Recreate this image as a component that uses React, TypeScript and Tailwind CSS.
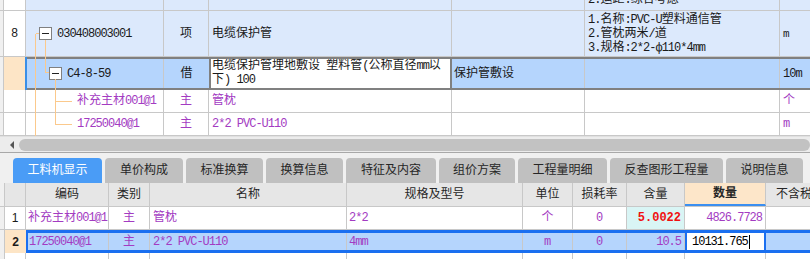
import React from "react";

const ascii = /^[\x20-\x7e\u0444]+$/;

function mix(s: string) {
  return s
    .split(/([\x20-\x7e\u0444]+)/)
    .filter(Boolean)
    .map((p, i) =>
      ascii.test(p) ? (
        <span key={i} className="tracking-[-1px] whitespace-pre">
          {p}
        </span>
      ) : (
        <span key={i}>{p}</span>
      )
    );
}

function MinusBox() {
  return (
    <span className="w-[13px] h-[13px] shrink-0 border border-[#808080] bg-white flex items-center justify-center">
      <span className="w-[7px] h-[1px] bg-[#222]" />
    </span>
  );
}

const tabs = [
  { label: "工料机显示", w: "w-[89px]", active: true },
  { label: "单价构成", w: "w-[78px]" },
  { label: "标准换算", w: "w-[77px]" },
  { label: "换算信息", w: "w-[77px]" },
  { label: "特征及内容", w: "w-[90px]" },
  { label: "组价方案", w: "w-[76px]" },
  { label: "工程量明细", w: "w-[89px]" },
  { label: "反查图形工程量", w: "w-[113px]" },
  { label: "说明信息", w: "w-[77px]" },
];

export default function App() {
  const purple = "text-[#a33bc2]";
  return (
    <div className="w-[810px] h-[259px] overflow-hidden bg-[#f0f0f0] text-[12px] leading-[14px] text-[#1a1a1a] font-['Liberation_Mono','Noto_Sans_CJK_SC',monospace]">
      {/* upper tree grid */}
      <div className="relative h-[136px] bg-white">
        {/* partial row */}
        <div className="flex h-[11px] border-b border-[#c8c8c8]">
          <div className="w-[4px] bg-[#f0f0f0] border-r border-[#c8c8c8]" />
          <div className="w-[22px] bg-white border-r border-[#c8c8c8]" />
          <div className="w-[138px] bg-[#dce9fc] border-r border-[#c8c8c8]" />
          <div className="w-[45px] bg-[#dce9fc] border-r border-[#c8c8c8]" />
          <div className="w-[243px] bg-[#dce9fc] border-r border-[#c8c8c8]" />
          <div className="w-[133px] bg-[#dce9fc] border-r border-[#c8c8c8]" />
          <div className="w-[195px] bg-[#dce9fc] border-r border-[#c8c8c8] flex items-end pl-[3px] pb-[3px] overflow-hidden">
            <span className="whitespace-nowrap">{mix("2.运距:综合考虑")}</span>
          </div>
          <div className="flex-1 bg-[#dce9fc]" />
        </div>

        {/* row 8 */}
        <div className="flex h-[46px] border-b border-[#c8c8c8]">
          <div className="w-[4px] bg-[#f0f0f0] border-r border-[#c8c8c8]" />
          <div className="w-[22px] bg-white border-r border-[#c8c8c8] flex items-center justify-center">8</div>
          <div className="w-[138px] bg-[#dce9fc] border-r border-[#c8c8c8] flex items-center pl-[13px] gap-[5px]">
            <MinusBox />
            <span className="tracking-[-1px]">030408003001</span>
          </div>
          <div className="w-[45px] bg-[#dce9fc] border-r border-[#c8c8c8] flex items-center justify-center">项</div>
          <div className="w-[243px] bg-[#dce9fc] border-r border-[#c8c8c8] flex items-center pl-[3px]">电缆保护管</div>
          <div className="w-[133px] bg-[#dce9fc] border-r border-[#c8c8c8]" />
          <div className="w-[195px] bg-[#dce9fc] border-r border-[#c8c8c8] flex flex-col justify-center pl-[3px]">
            <div>{mix("1.名称:PVC-U塑料通信管")}</div>
            <div>{mix("2.管枕两米/道")}</div>
            <div>{mix("3.规格:2*2-ф110*4mm")}</div>
          </div>
          <div className="flex-1 bg-[#dce9fc] flex items-center pl-[3px] text-[11px]">m</div>
        </div>

        {/* row C4-8-59 */}
        <div className="flex h-[33px]">
          <div className="w-[4px] bg-[#f0f0f0] border-r border-[#c8c8c8]" />
          <div className="w-[23px] bg-[#fde5c6] border-r-2 border-[#3a8ee6]" />
          <div className="flex flex-1 border-y-2 border-[#808080] bg-[#b5d5fd]">
            <div className="w-[137px] border-r border-[#c8c8c8] flex items-center pl-[22px] gap-[5px]">
              <MinusBox />
              <span className="tracking-[-1px]">C4-8-59</span>
            </div>
            <div className="w-[45px] flex items-center justify-center">借</div>
            <div className="w-[243px] bg-white border-x-2 border-[#808080] pl-[1px] leading-[14px] pt-0 overflow-hidden">
              {mix("电缆保护管埋地敷设 塑料管(公称直径mm以下) 100")}
            </div>
            <div className="w-[133px] border-r border-[#c8c8c8] flex items-center pl-[2px]">保护管敷设</div>
            <div className="w-[195px] border-r border-[#c8c8c8]" />
            <div className="flex-1 flex items-center pl-[3px] tracking-[-1px]">10m</div>
          </div>
        </div>

        {/* child rows */}
        {[
          { code: "补充主材001@1", name: "管枕", unit: "个" },
          { code: "17250040@1", name: "2*2 PVC-U110", unit: "m" },
        ].map((r) => (
          <div key={r.code} className="flex h-[23px] border-b border-[#c8c8c8]">
            <div className="w-[4px] bg-[#f0f0f0] border-r border-[#c8c8c8]" />
            <div className="w-[22px] border-r border-[#c8c8c8]" />
            <div className={`w-[138px] border-r border-[#c8c8c8] flex items-center pl-[51px] whitespace-nowrap ${purple}`}>
              {mix(r.code)}
            </div>
            <div className={`w-[45px] border-r border-[#c8c8c8] flex items-center justify-center ${purple}`}>主</div>
            <div className={`w-[243px] border-r border-[#c8c8c8] flex items-center pl-[3px] ${purple}`}>{mix(r.name)}</div>
            <div className="w-[133px] border-r border-[#c8c8c8]" />
            <div className="w-[195px] border-r border-[#c8c8c8]" />
            <div className={`flex-1 flex items-center pl-[3px] ${purple}`}>{r.unit}</div>
          </div>
        ))}

        {/* tree connectors */}
        <svg className="absolute left-0 top-0 pointer-events-none" width="810" height="136">
          <g stroke="#fbc98c" strokeWidth="1" fill="none" shapeRendering="crispEdges">
            <path d="M35.5 33.5V136M35.5 33.5H39" />
            <path d="M45.5 40V72.5H49" />
            <path d="M55.5 79V124.5H72M55.5 101.5H72" />
          </g>
        </svg>
      </div>

      {/* horizontal scrollbar */}
      <div className="h-[17px] bg-[#ececec] border-y border-[#e0e0e0] border-b-[#a8a8a8] flex items-center">
        <div className="w-[19px] flex justify-center pl-[4px]">
          <span className="w-0 h-0 border-y-[4px] border-y-transparent border-r-[4px] border-r-[#555]" />
        </div>
        <div className="flex-1 h-[12px] rounded-full bg-[#c2c2c2]" />
      </div>

      {/* tabs */}
      <div className="flex gap-[3px] pl-[13px] pt-[5px] h-[30px]">
        {tabs.map((t) => (
          <div
            key={t.label}
            className={`${t.w} h-[25px] rounded-t-[4px] flex items-center justify-center text-[12px] ${
              t.active ? "bg-[#4a9cf6] text-white" : "bg-[#c0c0c0] text-[#262626]"
            }`}
          >
            {t.label}
          </div>
        ))}
      </div>

      {/* lower grid */}
      <div className="bg-white">
        <div className="flex h-[24px] bg-[#e6e6e6] border-b border-[#c8c8c8] text-[#262626]">
          <div className="w-[5px] bg-[#f0f0f0] border-r border-[#c8c8c8]" />
          <div className="w-[21px] border-r border-[#c8c8c8]" />
          <div className="w-[83px] border-r border-[#c8c8c8] flex items-center justify-center">编码</div>
          <div className="w-[41px] border-r border-[#c8c8c8] flex items-center justify-center">类别</div>
          <div className="w-[197px] border-r border-[#c8c8c8] flex items-center justify-center">名称</div>
          <div className="w-[176px] border-r border-[#c8c8c8] flex items-center justify-center">规格及型号</div>
          <div className="w-[50px] border-r border-[#c8c8c8] flex items-center justify-center">单位</div>
          <div className="w-[54px] border-r border-[#c8c8c8] flex items-center justify-center">损耗率</div>
          <div className="w-[58px] border-r border-[#c8c8c8] flex items-center justify-center">含量</div>
          <div className="w-[81px] border-r border-[#c8c8c8] bg-[#fde6c9] border-b-2 border-b-[#3b8ff0] flex items-center justify-center font-bold">
            数量
          </div>
          <div className="flex-1 flex items-center pl-[10px] whitespace-nowrap overflow-hidden">不含税</div>
        </div>

        {/* row 1 */}
        <div className="flex h-[23px] border-b border-[#c8c8c8]">
          <div className="w-[5px] bg-[#f0f0f0] border-r border-[#c8c8c8]" />
          <div className="w-[21px] border-r border-[#c8c8c8] flex items-center justify-center font-['Liberation_Sans']">1</div>
          <div className={`w-[83px] border-r border-[#c8c8c8] flex items-center pl-[2px] whitespace-nowrap overflow-hidden ${purple}`}>
            {mix("补充主材001@1")}
          </div>
          <div className={`w-[41px] border-r border-[#c8c8c8] flex items-center justify-center ${purple}`}>主</div>
          <div className={`w-[197px] border-r border-[#c8c8c8] flex items-center pl-[3px] ${purple}`}>管枕</div>
          <div className={`w-[176px] border-r border-[#c8c8c8] flex items-center pl-[2px] tracking-[-1px] ${purple}`}>2*2</div>
          <div className={`w-[50px] border-r border-[#c8c8c8] flex items-center justify-center ${purple}`}>个</div>
          <div className={`w-[54px] border-r border-[#c8c8c8] flex items-center justify-center ${purple}`}>0</div>
          <div className="w-[58px] border-r border-[#c8c8c8] bg-[#d9f5f5] flex items-center justify-end pr-[3px] font-bold text-[#f01010]">
            5.0022
          </div>
          <div className={`w-[81px] border-r border-[#c8c8c8] flex items-center justify-end pr-[3px] tracking-[-1px] ${purple}`}>
            4826.7728
          </div>
          <div className="flex-1" />
        </div>

        {/* row 2 selected */}
        <div className="flex h-[23px]">
          <div className="w-[5px] bg-[#f0f0f0] border-r border-[#c8c8c8]" />
          <div className="w-[21px] bg-[#fde5c6] flex items-center justify-center font-bold font-['Liberation_Sans']">2</div>
          <div className="flex flex-1 border-y-[3px] border-l-2 border-[#1a6ff0] bg-[#b5d5fd]">
            <div className={`w-[81px] border-r border-[#c8c8c8] flex items-center pl-[1px] tracking-[-1px] ${purple}`}>17250040@1</div>
            <div className={`w-[41px] border-r border-[#c8c8c8] flex items-center justify-center ${purple}`}>主</div>
            <div className={`w-[197px] border-r border-[#c8c8c8] flex items-center pl-[3px] whitespace-pre tracking-[-1px] ${purple}`}>
              2*2 PVC-U110
            </div>
            <div className={`w-[176px] border-r border-[#c8c8c8] flex items-center pl-[2px] tracking-[-1px] ${purple}`}>4mm</div>
            <div className={`w-[50px] border-r border-[#c8c8c8] flex items-center justify-center ${purple}`}>m</div>
            <div className={`w-[54px] border-r border-[#c8c8c8] flex items-center justify-center ${purple}`}>0</div>
            <div className={`w-[58px] border-r border-[#c8c8c8] flex items-center justify-end pr-[3px] tracking-[-1px] ${purple}`}>10.5</div>
            <div className="w-[81px] bg-white border-2 border-[#1a6ff0] -my-[2px] flex items-center pl-[5px] text-black">
              <span className="tracking-[-1px]">10131.765</span>
              <span className="w-[1px] h-[14px] bg-black ml-[1px]" />
            </div>
            <div className="flex-1" />
          </div>
        </div>

        {/* row 3 (cut) */}
        <div className="flex h-[10px]">
          <div className="w-[5px] bg-[#f0f0f0] border-r border-[#c8c8c8]" />
          <div className="w-[21px] border-r border-[#c8c8c8]" />
          <div className="w-[83px] border-r border-[#c8c8c8]" />
          <div className="w-[41px] border-r border-[#c8c8c8]" />
          <div className="w-[197px] border-r border-[#c8c8c8]" />
          <div className="w-[176px] border-r border-[#c8c8c8]" />
          <div className="w-[50px] border-r border-[#c8c8c8]" />
          <div className="w-[54px] border-r border-[#c8c8c8]" />
          <div className="w-[58px] border-r border-[#c8c8c8]" />
          <div className="w-[81px] border-r border-[#c8c8c8]" />
          <div className="flex-1" />
        </div>
      </div>
    </div>
  );
}
